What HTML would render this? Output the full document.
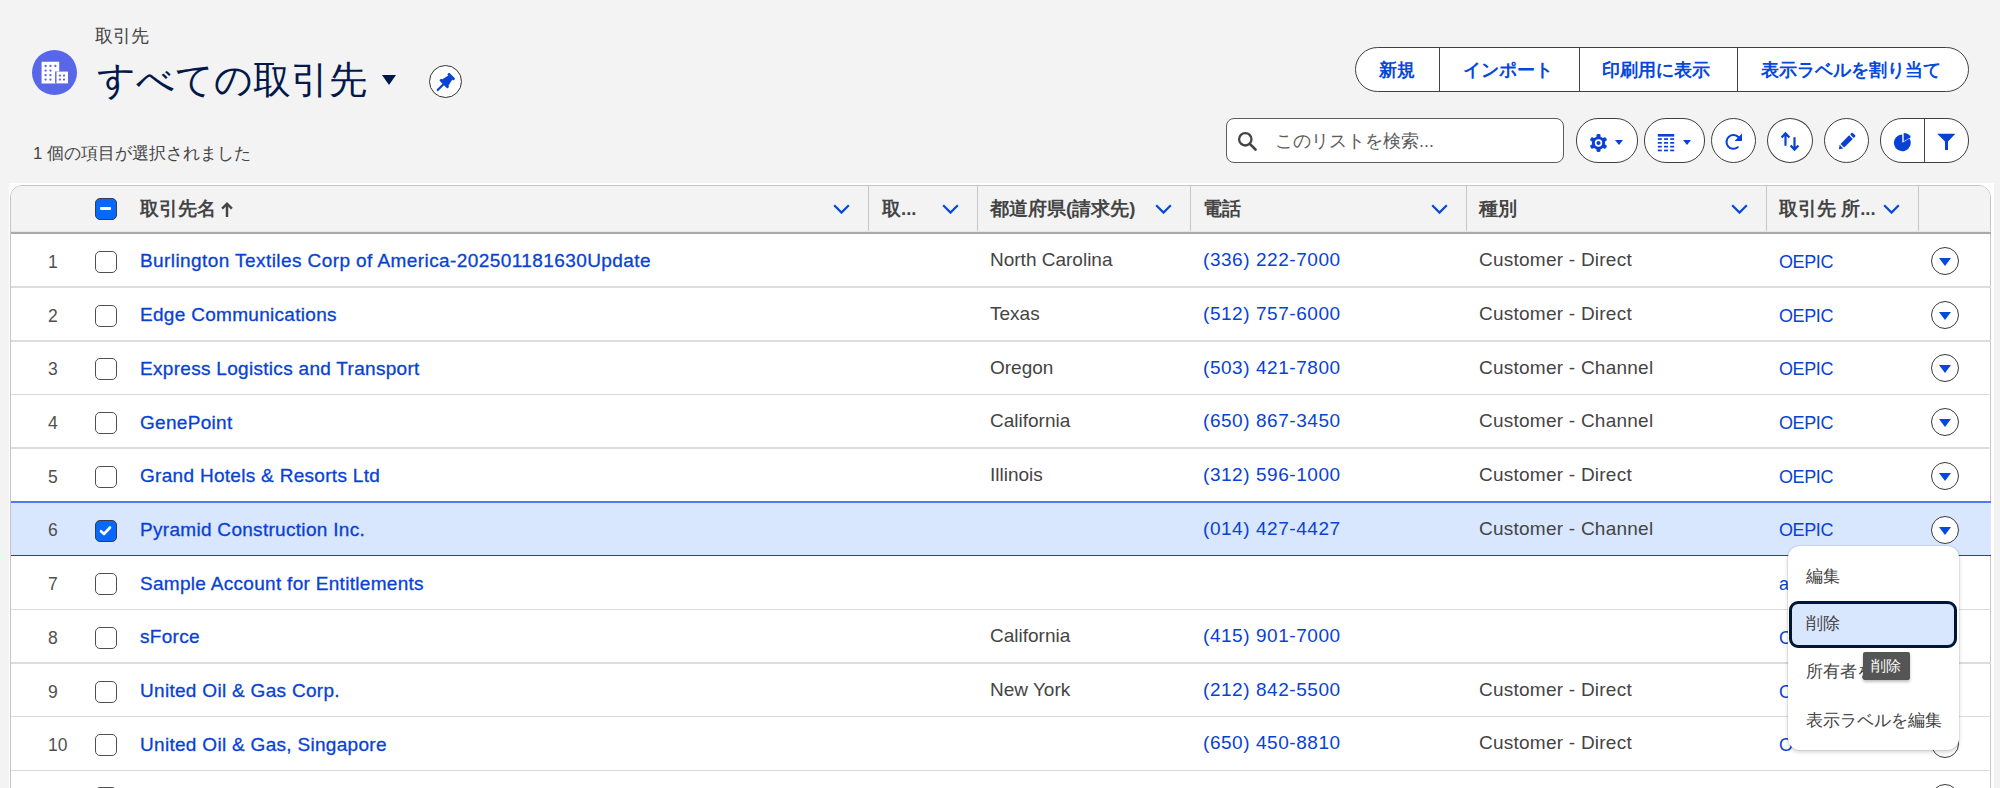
<!DOCTYPE html>
<html lang="ja">
<head>
<meta charset="utf-8">
<style>
*{box-sizing:border-box;margin:0;padding:0}
html,body{width:2000px;height:788px;overflow:hidden;background:#f3f3f3;font-family:"Liberation Sans",sans-serif;color:#444}
.abs{position:absolute}
.nw{white-space:nowrap}
.blue{color:#0548dc}
.circ{position:absolute;border:1.6px solid #3f3f3f;border-radius:50%;background:#fff}
.pill{position:absolute;border:1.6px solid #3f3f3f;border-radius:22px;background:#fff}
.hdr{position:absolute;top:184px;height:49px;font-weight:700;font-size:18.5px;color:#444;line-height:49px}
.div{position:absolute;top:186px;height:45px;width:1.2px;background:#c6c6c6}
.chev{position:absolute;top:204px;width:17px;height:10px}
.rowline{position:absolute;left:11px;width:1980px;height:1.5px;background:#dcdcdc}
.cell{position:absolute;font-size:19px;line-height:20px;white-space:nowrap}
.num{color:#505050;font-size:17.5px;margin-top:0.6px}
.cb{position:absolute;left:95px;width:22px;height:22px;border:1.5px solid #4f4f4f;border-radius:5px;background:#fff}
.link{color:#0842d4;letter-spacing:0.3px;-webkit-text-stroke:0.3px #0842d4}
.phone{color:#0842d4;letter-spacing:0.55px}
.owner{color:#0842d4;font-size:18px;letter-spacing:-0.4px;margin-top:0.5px}
.typ{letter-spacing:0.24px}
.cb.sel{background:#0868fb;border-color:#3a3a4a}
.act{position:absolute;left:1931px;width:28px;height:28px;border:1.5px solid #3a3a3a;border-radius:50%;background:#fff}
.act:after{content:"";position:absolute;left:7px;top:10px;border-left:6px solid transparent;border-right:6px solid transparent;border-top:8px solid #0548dc}
</style>
</head>
<body>
<!-- page header -->
<div class="abs" style="left:32px;top:50px;width:45px;height:45px;border-radius:50%;background:#5867e8">
  <svg width="45" height="45" viewBox="0 0 45 45" style="position:absolute;left:0;top:0">
    <path d="M9.6 11.8H27.2V21.6H23.8V33.4H9.6Z" fill="#fff"/>
    <rect x="23.8" y="21.6" width="12.2" height="11.8" fill="#fff"/>
    <g fill="#5867e8">
      <circle cx="13.6" cy="16" r="1.15"/><circle cx="18.5" cy="16" r="1.15"/><circle cx="23.4" cy="16" r="1.15"/>
      <circle cx="13.6" cy="20.6" r="1.15"/><circle cx="18.5" cy="20.6" r="1.15"/>
      <circle cx="13.6" cy="25.2" r="1.15"/><circle cx="18.5" cy="25.2" r="1.15"/>
      <circle cx="13.6" cy="29.6" r="1.15"/><circle cx="18.5" cy="29.6" r="1.15"/>
      <circle cx="27.9" cy="25.6" r="1.15"/><circle cx="32" cy="25.6" r="1.15"/>
      <circle cx="27.9" cy="29.6" r="1.15"/><circle cx="32" cy="29.6" r="1.15"/>
    </g>
    <path d="M23.8 21.6V33.4" stroke="#5867e8" stroke-width="1.4"/>
  </svg>
</div>
<div class="abs nw" style="left:95px;top:24px;font-size:18px;line-height:24px;color:#444">取引先</div>
<div class="abs nw" style="left:97px;top:56px;font-size:38px;line-height:48px;color:#03184a">すべての取引先</div>
<div class="abs" style="left:382px;top:75px;border-left:7px solid transparent;border-right:7px solid transparent;border-top:10px solid #03184a"></div>
<div class="circ" style="left:429px;top:65px;width:33px;height:33px;background:#fff;border:1.6px solid #333"></div>

<div class="abs nw" style="left:33px;top:142.6px;font-size:16.8px;line-height:22px;color:#444">1 個の項目が選択されました</div>

<!-- button group -->
<div class="pill" style="left:1355px;top:47px;width:614px;height:45px;border-radius:23px"></div>
<div class="abs" style="left:1439px;top:48px;width:1.3px;height:43px;background:#444"></div>
<div class="abs" style="left:1579px;top:48px;width:1.3px;height:43px;background:#444"></div>
<div class="abs" style="left:1737px;top:48px;width:1.3px;height:43px;background:#444"></div>
<div class="abs nw blue" style="left:1379px;top:58px;font-size:18px;line-height:24px;font-weight:700">新規</div>
<div class="abs nw blue" style="left:1463px;top:58px;font-size:18px;line-height:24px;font-weight:700">インポート</div>
<div class="abs nw blue" style="left:1602px;top:58px;font-size:18px;line-height:24px;font-weight:700">印刷用に表示</div>
<div class="abs nw blue" style="left:1761px;top:58px;font-size:18px;line-height:24px;font-weight:700">表示ラベルを割り当て</div>

<!-- search -->
<div class="abs" style="left:1226px;top:118px;width:338px;height:45px;border:1.5px solid #5c5c5c;border-radius:8px;background:#fff"></div>
<div class="abs nw" style="left:1275px;top:129px;font-size:17.8px;line-height:24px;color:#5c5c5c">このリストを検索...</div>

<!-- icon buttons -->
<div class="pill" style="left:1576px;top:118px;width:62px;height:45px"></div>
<div class="pill" style="left:1644px;top:118px;width:61px;height:45px"></div>
<div class="circ" style="left:1711px;top:118px;width:45px;height:45px"></div>
<div class="circ" style="left:1767px;top:118px;width:46px;height:45px"></div>
<div class="circ" style="left:1824px;top:118px;width:45px;height:45px"></div>
<div class="pill" style="left:1880px;top:118px;width:89px;height:45px"></div>
<div class="abs" style="left:1924px;top:119px;width:1.3px;height:43px;background:#444"></div>


<!-- icons -->
<svg class="abs" style="left:1237px;top:131px" width="21" height="20" viewBox="0 0 21 20"><circle cx="8.3" cy="8.3" r="6.2" fill="none" stroke="#444" stroke-width="2.3"/><path d="M12.8 12.8L18.5 18.5" stroke="#444" stroke-width="2.6" stroke-linecap="round"/></svg>
<svg class="abs" style="left:1589px;top:133px" width="19" height="20" viewBox="0 0 19 20">
 <g fill="#0842d4" transform="translate(9.5 10)">
  <circle r="6.6"/>
  <rect x="-2" y="-9" width="4" height="4" rx="1.4" transform="rotate(0)"/>
  <rect x="-2" y="-9" width="4" height="4" rx="1.4" transform="rotate(60)"/>
  <rect x="-2" y="-9" width="4" height="4" rx="1.4" transform="rotate(120)"/>
  <rect x="-2" y="-9" width="4" height="4" rx="1.4" transform="rotate(180)"/>
  <rect x="-2" y="-9" width="4" height="4" rx="1.4" transform="rotate(240)"/>
  <rect x="-2" y="-9" width="4" height="4" rx="1.4" transform="rotate(300)"/>
 </g>
 <circle cx="9.5" cy="10" r="3.7" fill="#fff"/><circle cx="9.5" cy="10" r="2.1" fill="#0842d4"/>
</svg>
<div class="abs" style="left:1615px;top:140px;border-left:4px solid transparent;border-right:4px solid transparent;border-top:5.5px solid #0842d4"></div>
<svg class="abs" style="left:1657px;top:133px" width="18" height="20" viewBox="0 0 18 20" fill="#0842d4">
 <rect x="0.8" y="1" width="16.4" height="2.6"/>
 <g id="tr"><rect x="0.8" y="5.2" width="4" height="1.7"/><rect x="7" y="5.2" width="4" height="1.7"/><rect x="13.2" y="5.2" width="4" height="1.7"/></g>
 <use href="#tr" y="3.8"/><use href="#tr" y="7.6"/><use href="#tr" y="11.4"/>
</svg>
<div class="abs" style="left:1683px;top:140px;border-left:4px solid transparent;border-right:4px solid transparent;border-top:5.5px solid #0842d4"></div>
<svg class="abs" style="left:1724px;top:132px" width="20" height="20" viewBox="0 0 20 20"><path d="M13.74 15.26A6.9 6.9 0 1 1 14.53 5.28" fill="none" stroke="#0842d4" stroke-width="2.1" stroke-linecap="round"/><path d="M18 1.6V8.9H10.6Z" fill="#0842d4"/></svg>
<svg class="abs" style="left:1780px;top:131px" width="21" height="21" viewBox="0 0 21 21" fill="none" stroke="#0842d4" stroke-width="2.2"><path d="M5.5 14.8V3M1.6 6.6L5.5 2.4 9.4 6.6"/><path d="M14.5 6.2V18M10.6 14.4L14.5 18.6 18.4 14.4"/></svg>
<svg class="abs" style="left:1836px;top:131px" width="21" height="21" viewBox="0 0 21 21"><g fill="#0842d4" transform="translate(10.5 10.6) rotate(45)"><rect x="-2.6" y="-10.6" width="5.2" height="3" rx="0.9"/><rect x="-2.6" y="-6.3" width="5.2" height="12.2"/><path d="M-2.6 7.1H2.6L0 10.8Z"/></g></svg>
<svg class="abs" style="left:1893px;top:131px" width="20" height="21" viewBox="0 0 20 21" fill="#0842d4"><path d="M9.3 11.8L16.57 7.6A8.4 8.4 0 1 1 9.3 3.4Z"/><path d="M10.7 10.3V2A8.3 8.3 0 0 1 17.9 6.15Z"/></svg>
<svg class="abs" style="left:1936px;top:132px" width="21" height="20" viewBox="0 0 21 20" fill="#0842d4"><path d="M1.2 1.8H19.4L12 9.6V18H9V9.6Z"/></svg>
<svg class="abs" style="left:425px;top:60px" width="42" height="42" viewBox="0 0 42 42"><g fill="#0842d4" transform="translate(19.6 23.2) rotate(45) translate(-12 -10.75)"><rect x="7.6" y="0" width="8.8" height="2.8" rx="1"/><path d="M9.2 2.6H14.8L16.6 10.4H7.4Z"/><rect x="6.2" y="9.8" width="11.6" height="2.8" rx="1"/><rect x="10.9" y="12" width="2.2" height="9.5" rx="1"/></g></svg>

<!-- table -->
<div class="abs" style="left:9px;top:183px;width:1985px;height:605px;background:#fff"></div>
<div class="abs" style="left:10px;top:185px;width:1981px;height:620px;border:1.3px solid #c4c4c4;border-radius:12px 12px 0 0;background:#fff;overflow:hidden">
  <div class="abs" style="left:0;top:0;width:1981px;height:48px;background:#f3f3f3"></div>
</div>
<div class="abs" style="left:11px;top:231px;width:1980px;height:1px;background:#e6e6e6"></div><div class="abs" style="left:11px;top:232.3px;width:1980px;height:1.6px;background:#a9a9a9"></div>


<!-- column headers -->
<div class="cb" style="top:197.8px;background:#0868fb;border-color:#3a3a4a;border-width:1.3px"><div class="abs" style="left:4px;top:8px;width:11px;height:3.5px;background:#fff;border-radius:1px"></div></div>
<div class="hdr nw" style="left:140px">取引先名</div>
<svg class="abs" style="left:221px;top:202.3px" width="12" height="15.5" viewBox="0 0 12 15.5"><path d="M6 15V2M1.1 6.6L6 1.7 10.9 6.6" fill="none" stroke="#444" stroke-width="2.4"/></svg>
<div class="hdr nw" style="left:882px">取...</div>
<div class="hdr nw" style="left:990px">都道府県(請求先)</div>
<div class="hdr nw" style="left:1203px">電話</div>
<div class="hdr nw" style="left:1479px">種別</div>
<div class="hdr nw" style="left:1779px">取引先 所...</div>
<div class="div" style="left:868px"></div>
<div class="div" style="left:977px"></div>
<div class="div" style="left:1190px"></div>
<div class="div" style="left:1466px"></div>
<div class="div" style="left:1766px"></div>
<div class="div" style="left:1918px"></div>
<svg class="chev" style="left:833px" viewBox="0 0 17 10"><path d="M1.2 1.2L8.5 8.6 15.8 1.2" fill="none" stroke="#0548dc" stroke-width="2.2"/></svg>
<svg class="chev" style="left:941.5px" viewBox="0 0 17 10"><path d="M1.2 1.2L8.5 8.6 15.8 1.2" fill="none" stroke="#0548dc" stroke-width="2.2"/></svg>
<svg class="chev" style="left:1154.5px" viewBox="0 0 17 10"><path d="M1.2 1.2L8.5 8.6 15.8 1.2" fill="none" stroke="#0548dc" stroke-width="2.2"/></svg>
<svg class="chev" style="left:1430.5px" viewBox="0 0 17 10"><path d="M1.2 1.2L8.5 8.6 15.8 1.2" fill="none" stroke="#0548dc" stroke-width="2.2"/></svg>
<svg class="chev" style="left:1731px" viewBox="0 0 17 10"><path d="M1.2 1.2L8.5 8.6 15.8 1.2" fill="none" stroke="#0548dc" stroke-width="2.2"/></svg>
<svg class="chev" style="left:1883px" viewBox="0 0 17 10"><path d="M1.2 1.2L8.5 8.6 15.8 1.2" fill="none" stroke="#0548dc" stroke-width="2.2"/></svg>
<!--ROWS-->
<div class="rowline" style="top:286.3px"></div>
<div class="cell num" style="left:48px;top:251.4px">1</div>
<div class="cb" style="top:251.0px"></div>
<div class="cell link" style="left:140px;top:251.4px;letter-spacing:0.42px">Burlington Textiles Corp of America-202501181630Update</div>
<div class="cell" style="left:990px;top:250.1px">North Carolina</div>
<div class="cell phone" style="left:1203px;top:250.1px">(336) 222-7000</div>
<div class="cell typ" style="left:1479px;top:250.1px">Customer - Direct</div>
<div class="cell owner" style="left:1779px;top:251.4px">OEPIC</div>
<div class="act" style="top:247.0px"></div>
<div class="rowline" style="top:340.0px"></div>
<div class="cell num" style="left:48px;top:305.1px">2</div>
<div class="cb" style="top:304.7px"></div>
<div class="cell link" style="left:140px;top:305.1px">Edge Communications</div>
<div class="cell" style="left:990px;top:303.8px">Texas</div>
<div class="cell phone" style="left:1203px;top:303.8px">(512) 757-6000</div>
<div class="cell typ" style="left:1479px;top:303.8px">Customer - Direct</div>
<div class="cell owner" style="left:1779px;top:305.1px">OEPIC</div>
<div class="act" style="top:300.7px"></div>
<div class="rowline" style="top:393.7px"></div>
<div class="cell num" style="left:48px;top:358.8px">3</div>
<div class="cb" style="top:358.4px"></div>
<div class="cell link" style="left:140px;top:358.8px">Express Logistics and Transport</div>
<div class="cell" style="left:990px;top:357.5px">Oregon</div>
<div class="cell phone" style="left:1203px;top:357.5px">(503) 421-7800</div>
<div class="cell typ" style="left:1479px;top:357.5px">Customer - Channel</div>
<div class="cell owner" style="left:1779px;top:358.8px">OEPIC</div>
<div class="act" style="top:354.4px"></div>
<div class="rowline" style="top:447.4px"></div>
<div class="cell num" style="left:48px;top:412.5px">4</div>
<div class="cb" style="top:412.1px"></div>
<div class="cell link" style="left:140px;top:412.5px">GenePoint</div>
<div class="cell" style="left:990px;top:411.2px">California</div>
<div class="cell phone" style="left:1203px;top:411.2px">(650) 867-3450</div>
<div class="cell typ" style="left:1479px;top:411.2px">Customer - Channel</div>
<div class="cell owner" style="left:1779px;top:412.5px">OEPIC</div>
<div class="act" style="top:408.1px"></div>
<div class="cell num" style="left:48px;top:466.2px">5</div>
<div class="cb" style="top:465.8px"></div>
<div class="cell link" style="left:140px;top:466.2px">Grand Hotels &amp; Resorts Ltd</div>
<div class="cell" style="left:990px;top:464.9px">Illinois</div>
<div class="cell phone" style="left:1203px;top:464.9px">(312) 596-1000</div>
<div class="cell typ" style="left:1479px;top:464.9px">Customer - Direct</div>
<div class="cell owner" style="left:1779px;top:466.2px">OEPIC</div>
<div class="act" style="top:461.8px"></div>
<div class="abs" style="left:11px;top:502.0px;width:1980px;height:53.7px;background:#d8e6fe"></div>
<div class="abs" style="left:11px;top:501.2px;width:1980px;height:1.5px;background:#5577ea"></div>
<div class="abs" style="left:11px;top:554.9px;width:1980px;height:1.5px;background:#0b44e0"></div>
<div class="cell num" style="left:48px;top:519.9px">6</div>
<div class="cb sel" style="top:519.5px"><svg width="19" height="19" viewBox="0 0 19 19" style="position:absolute;left:0;top:0"><path d="M5 10.2 L8 13 L14 6.5" fill="none" stroke="#fff" stroke-width="2.6" stroke-linecap="round" stroke-linejoin="round"/></svg></div>
<div class="cell link" style="left:140px;top:519.9px">Pyramid Construction Inc.</div>
<div class="cell phone" style="left:1203px;top:518.6px">(014) 427-4427</div>
<div class="cell typ" style="left:1479px;top:518.6px">Customer - Channel</div>
<div class="cell owner" style="left:1779px;top:519.9px">OEPIC</div>
<div class="act" style="top:515.5px"></div>
<div class="rowline" style="top:608.5px"></div>
<div class="cell num" style="left:48px;top:573.6px">7</div>
<div class="cb" style="top:573.2px"></div>
<div class="cell link" style="left:140px;top:573.6px">Sample Account for Entitlements</div>
<div class="cell owner" style="left:1779px;top:573.6px">a</div>
<div class="rowline" style="top:662.2px"></div>
<div class="cell num" style="left:48px;top:627.3px">8</div>
<div class="cb" style="top:626.9px"></div>
<div class="cell link" style="left:140px;top:627.3px">sForce</div>
<div class="cell" style="left:990px;top:626.0px">California</div>
<div class="cell phone" style="left:1203px;top:626.0px">(415) 901-7000</div>
<div class="cell owner" style="left:1779px;top:627.3px">O</div>
<div class="rowline" style="top:715.9px"></div>
<div class="cell num" style="left:48px;top:681.0px">9</div>
<div class="cb" style="top:680.6px"></div>
<div class="cell link" style="left:140px;top:681.0px">United Oil &amp; Gas Corp.</div>
<div class="cell" style="left:990px;top:679.7px">New York</div>
<div class="cell phone" style="left:1203px;top:679.7px">(212) 842-5500</div>
<div class="cell typ" style="left:1479px;top:679.7px">Customer - Direct</div>
<div class="cell owner" style="left:1779px;top:681.0px">O</div>
<div class="rowline" style="top:769.6px"></div>
<div class="cell num" style="left:48px;top:734.7px">10</div>
<div class="cb" style="top:734.3px"></div>
<div class="cell link" style="left:140px;top:734.7px">United Oil &amp; Gas, Singapore</div>
<div class="cell phone" style="left:1203px;top:733.4px">(650) 450-8810</div>
<div class="cell typ" style="left:1479px;top:733.4px">Customer - Direct</div>
<div class="cell owner" style="left:1779px;top:734.7px">O</div>
<div class="act" style="top:730.3px"></div>
<div class="cb" style="top:787.1px"></div>
<div class="act" style="top:784.0px"></div>
<!--/ROWS-->

<!-- row action menu -->
<div class="abs" style="left:1788px;top:546px;width:171px;height:204px;background:#fff;border-radius:12px;box-shadow:0 2px 4px rgba(0,0,0,0.18),0 0 0 1px rgba(0,0,0,0.06)"></div>
<div class="abs nw" style="left:1806px;top:565px;font-size:17px;line-height:24px;color:#444">編集</div>
<div class="abs" style="left:1789px;top:601px;width:168px;height:47px;background:#d8e6fe;border:3px solid #001639;border-radius:9px"></div>
<div class="abs nw" style="left:1806px;top:612px;font-size:17px;line-height:24px;color:#444">削除</div>
<div class="abs nw" style="left:1806px;top:660px;font-size:17px;line-height:24px;color:#444">所有者を変更</div>
<div class="abs nw" style="left:1806px;top:709px;font-size:17px;line-height:24px;color:#444">表示ラベルを編集</div>
<div class="abs" style="left:1863px;top:652px;width:47px;height:28px;background:#555;border-radius:2px;box-shadow:0 2px 3px rgba(0,0,0,0.25)"></div>
<div class="abs nw" style="left:1871px;top:656px;font-size:14.5px;line-height:20px;color:#fff">削除</div>
</body>
</html>
